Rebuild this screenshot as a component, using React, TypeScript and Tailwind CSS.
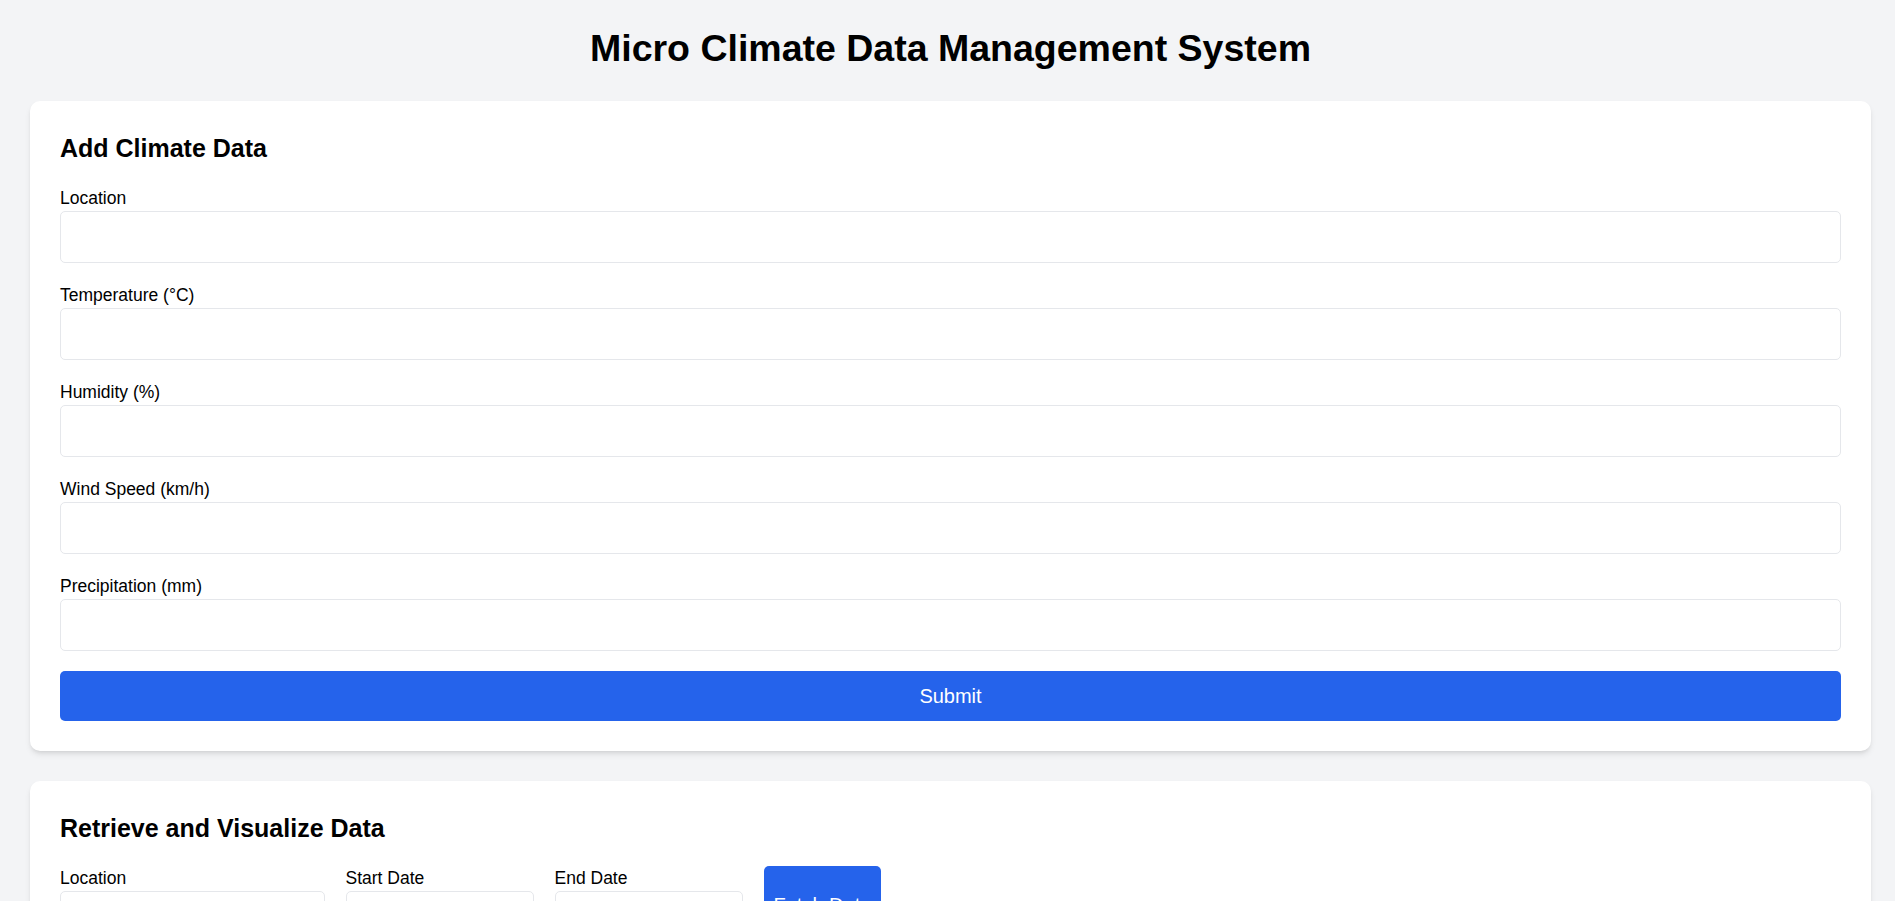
import React from "react";

const fields = [
  "Location",
  "Temperature (°C)",
  "Humidity (%)",
  "Wind Speed (km/h)",
  "Precipitation (mm)",
];

export default function App() {
  return (
    <div className="min-h-screen bg-[#f3f4f6] pt-[26px] pl-[30px] pr-[24px] pb-[30px] font-['Liberation_Sans',Arial,sans-serif] text-black">
      <h1 className="text-center text-[37.5px] leading-[45px] font-bold mb-[30px]">
        Micro Climate Data Management System
      </h1>

      <div className="bg-white rounded-[10px] shadow-md p-[30px] mb-[30px]">
        <h2 className="text-[25px] leading-[35px] font-bold mb-[20px]">Add Climate Data</h2>
        {fields.map((f) => (
          <div key={f} className="mb-[20px]">
            <label className="block text-[17.5px] leading-[25px]">{f}</label>
            <input
              type="text"
              className="block w-full h-[52px] border border-[#e5e7eb] rounded-[5px] px-[10px] text-[20px] outline-none bg-white"
            />
          </div>
        ))}
        <button className="block w-full h-[50px] bg-[#2563eb] text-white text-[20px] leading-[30px] rounded-[5px]">
          Submit
        </button>
      </div>

      <div className="bg-white rounded-[10px] shadow-md p-[30px] mb-[30px]">
        <h2 className="text-[25px] leading-[35px] font-bold mb-[20px]">Retrieve and Visualize Data</h2>
        <div className="flex gap-[20.5px]">
          <div>
            <label className="block text-[17.5px] leading-[25px]">Location</label>
            <input
              type="text"
              className="block w-[265px] h-[52px] border border-[#e5e7eb] rounded-[5px] px-[10px] text-[20px] outline-none"
            />
          </div>
          <div>
            <label className="block text-[17.5px] leading-[25px]">Start Date</label>
            <div className="w-[188.5px] h-[52px] border border-[#e5e7eb] rounded-[5px]" />
          </div>
          <div>
            <label className="block text-[17.5px] leading-[25px]">End Date</label>
            <div className="w-[188.5px] h-[52px] border border-[#e5e7eb] rounded-[5px]" />
          </div>
          <button className="bg-[#2563eb] text-white text-[20px] leading-[30px] px-[10px] rounded-[5px] whitespace-nowrap">
            Fetch Data
          </button>
        </div>
        <div className="h-[300px]" />
      </div>
    </div>
  );
}
